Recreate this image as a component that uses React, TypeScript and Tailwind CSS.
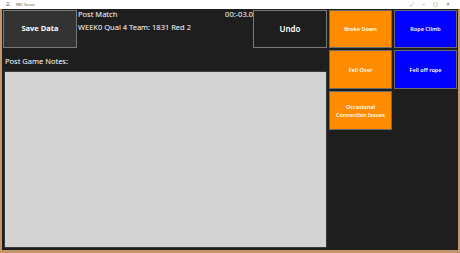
const font = { fontFamily: '"Noto Sans", "Open Sans", sans-serif' };

function ActionButton({
  label,
  color,
}: {
  label: React.ReactNode;
  color: "orange" | "blue";
}) {
  return (
    <div
      className={
        color === "orange"
          ? "flex items-center justify-center border border-[#6b6b6b] bg-[#ff8c00] text-center text-[5.5px] font-semibold leading-[8px] whitespace-nowrap text-white"
          : "flex items-center justify-center border border-[#6b6b6b] bg-[#0000ff] text-center text-[5.5px] font-semibold leading-[8px] whitespace-nowrap text-white"
      }
    >
      {label}
    </div>
  );
}

export default function App() {
  return (
    <div
      className="flex h-[253px] w-[460px] flex-col bg-[#c4956a] px-[2px] pb-[3px]"
      style={font}
    >
      {/* title bar */}
      <div className="-mx-[2px] flex h-[9px] items-center bg-white px-[6px] text-[4px] text-[#555]">
        <span className="mr-[6px] text-[4px]">☰</span>
        <span>FRC Scout</span>
        <div className="ml-auto flex items-center gap-[8px] pr-[4px] text-[5px] text-[#666]">
          <span>⤢</span>
          <span>–</span>
          <span>▢</span>
          <span>✕</span>
        </div>
      </div>

      <div className="flex flex-1 gap-px bg-[#1e1e1e] pl-px pr-px pt-px">
        {/* left side */}
        <div className="flex w-[324px] flex-col">
          <div className="flex h-[38px]">
            <div className="flex w-[74px] items-center justify-center border border-[#7a7a7a] bg-[#333333] text-[7.5px] font-bold text-white">
              Save Data
            </div>
            <div className="-mt-px flex flex-1 flex-col overflow-hidden pl-px text-[7.5px] leading-[10px] text-white">
              <div className="flex">
                <span>Post Match</span>
                <span className="ml-auto">00:-03.0</span>
              </div>
              <div className="mt-[3px]">WEEK0 Qual 4 Team: 1831 Red 2</div>
            </div>
            <div className="flex w-[74px] items-center justify-center border border-[#7a7a7a] bg-[#1e1e1e] text-[8px] font-semibold text-white">
              Undo
            </div>
          </div>
          <div className="mt-[8px] pl-[2px] text-[7.5px] leading-[11px] text-white">
            Post Game Notes:
          </div>
          <textarea
            readOnly
            className="mb-[2px] ml-px mt-[4px] flex-1 resize-none border border-[#3a3a3a] bg-[#d3d3d3] outline-none"
          />
        </div>

        {/* right side */}
        <div className="grid flex-1 grid-cols-2 grid-rows-[38px_39px_39px] content-start gap-[2px] pl-px">
          <ActionButton label="Broke Down" color="orange" />
          <ActionButton label="Rope Climb" color="blue" />
          <ActionButton label="Fell Over" color="orange" />
          <ActionButton label="Fell off rope" color="blue" />
          <ActionButton
            label={
              <span>
                Occasional
                <br />
                Connection Issues
              </span>
            }
            color="orange"
          />
        </div>
      </div>
    </div>
  );
}
